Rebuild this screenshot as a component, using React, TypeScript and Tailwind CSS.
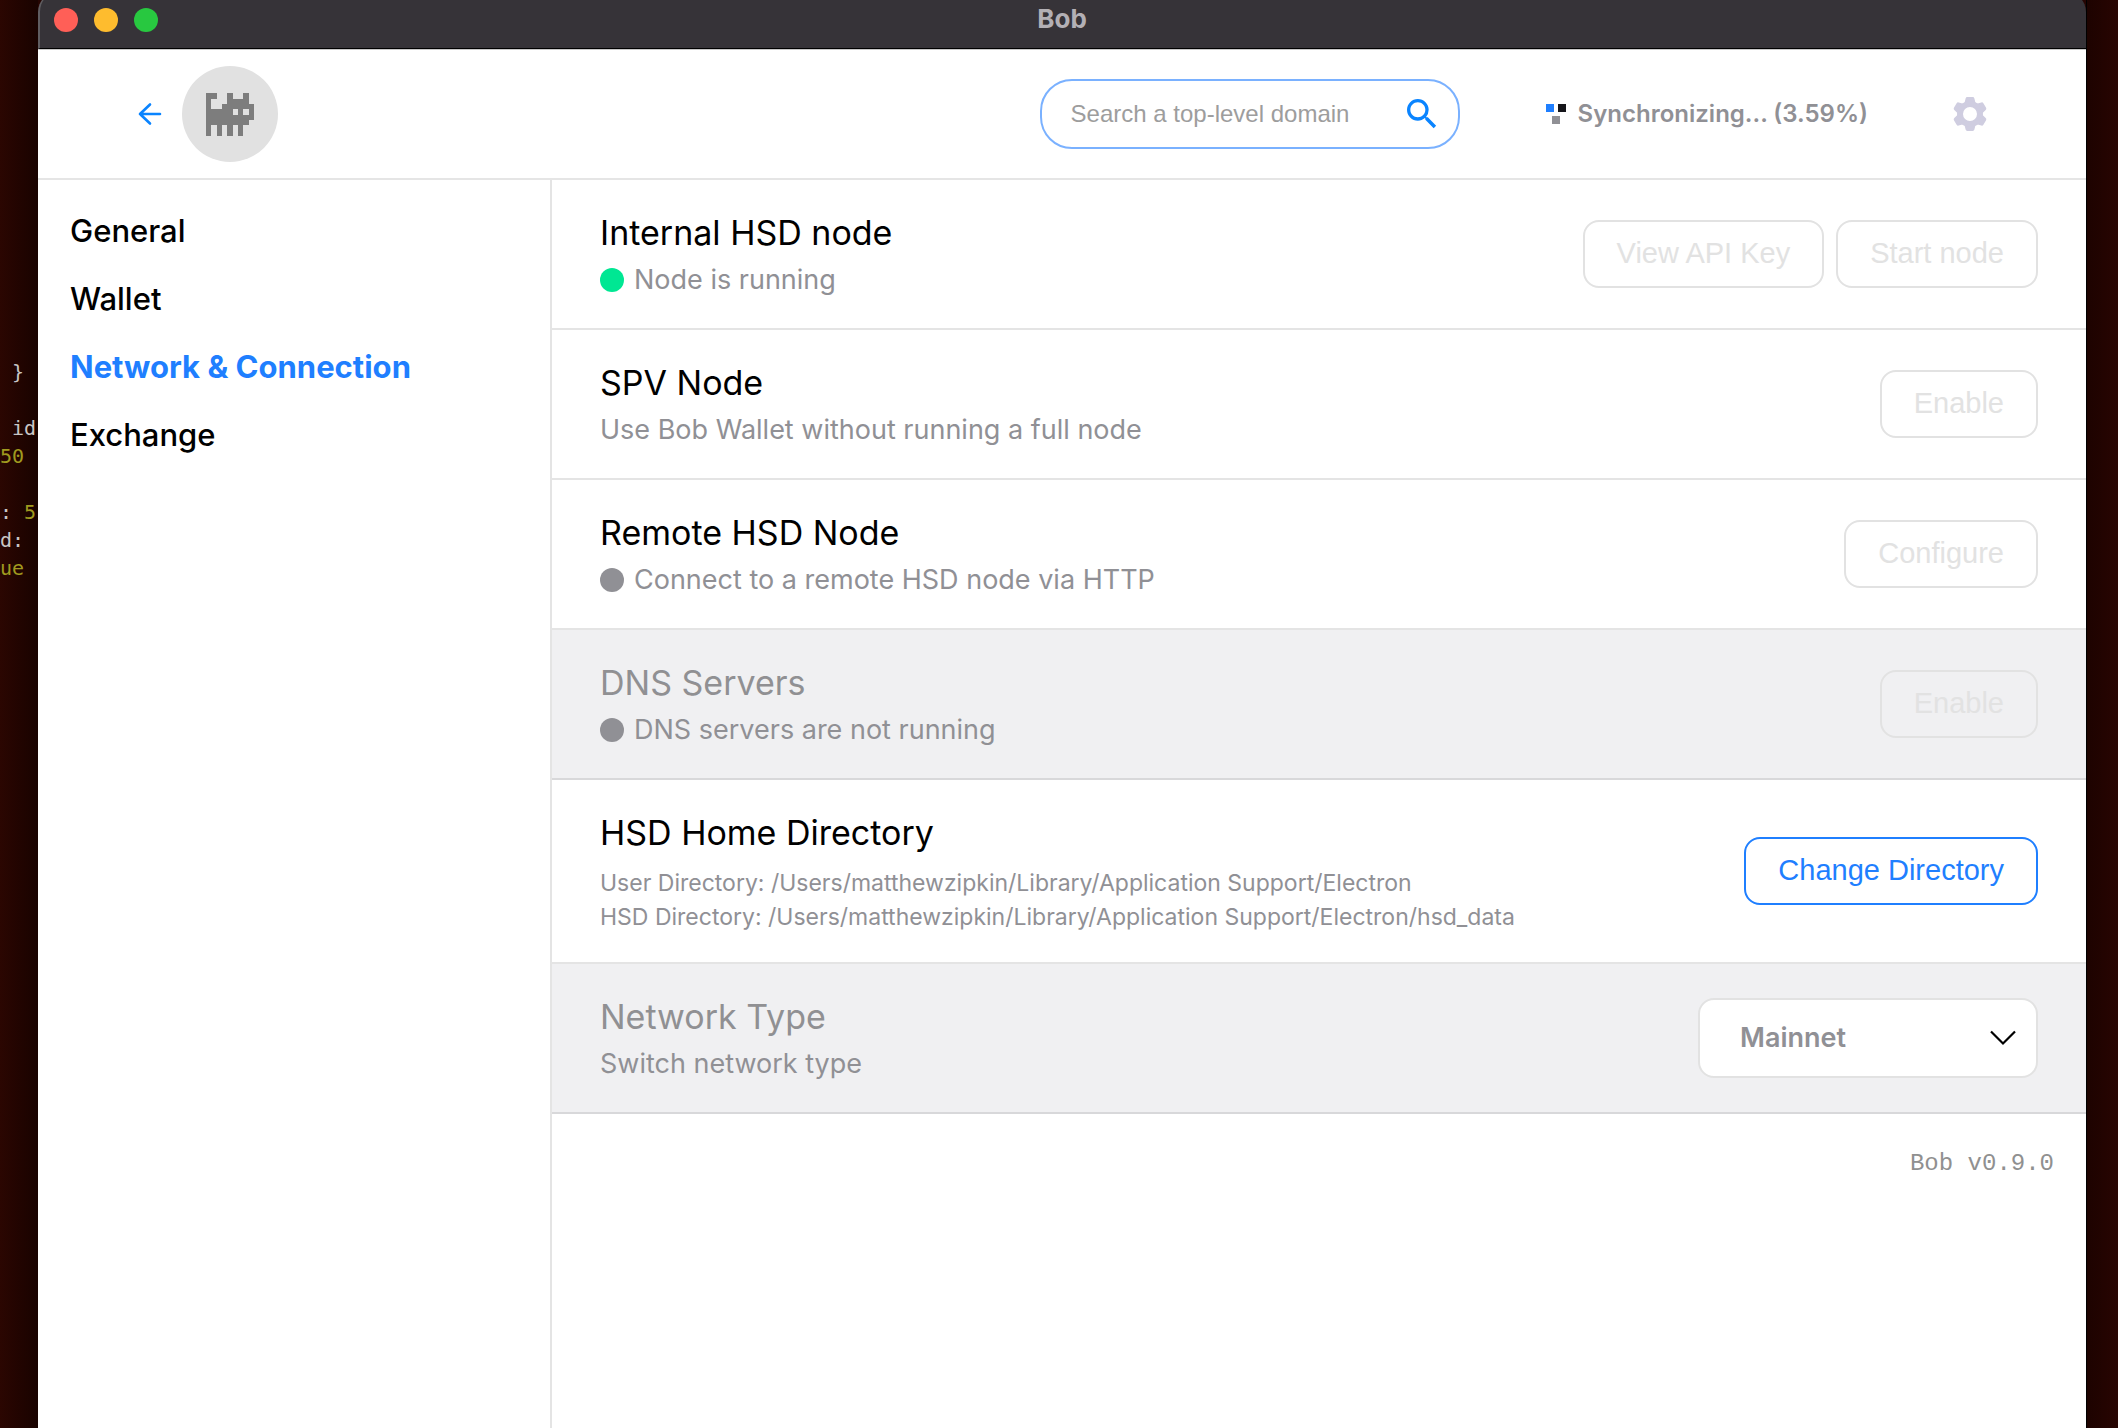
import { useState } from "react";
import { MdSearch } from "react-icons/md";

// what is still visible of the terminal behind the window
const terminalLines = [
  { text: " }", value: "" },
  { text: "", value: "" },
  { text: " id", value: "" },
  { text: "", value: "50" },
  { text: "", value: "" },
  { text: ": ", value: "5" },
  { text: "d:", value: "" },
  { text: "", value: "ue" },
];

const navItems = ["General", "Wallet", "Network & Connection", "Exchange"];

// one string per pixel row of the avatar
const catRows = [
  "##..#..#.",
  "#...####.",
  "#..######",
  "#####.#.#",
  "#########",
  "########.",
  "#.#.#.#..",
  "#.#.#.#..",
];

function Avatar() {
  return (
    <div className="flex size-24 items-center justify-center rounded-full bg-[#e1e1e1]">
      <svg
        viewBox="0 0 9 8"
        className="h-[43px] w-12"
        fill="#7d7d7d"
        shapeRendering="crispEdges"
        aria-hidden="true"
      >
        {catRows.map((row, y) =>
          row
            .split("")
            .map((cell, x) =>
              cell === "#" ? (
                <rect key={`${x}-${y}`} x={x} y={y} width="1" height="1" />
              ) : null
            )
        )}
      </svg>
    </div>
  );
}

function GearIcon() {
  return (
    <svg viewBox="0 0 34 34" className="size-[34px]" aria-hidden="true">
      {[0, 60, 120, 180, 240, 300].map((angle) => (
        <path
          key={angle}
          d="M12.6 1.4Q12.9 0 14.3 0H19.7Q21.1 0 21.4 1.4L23 8H11Z"
          fill="#cfcde0"
          transform={`rotate(${angle} 17 17)`}
        />
      ))}
      <circle
        cx="17"
        cy="17"
        r="10"
        fill="none"
        stroke="#cfcde0"
        strokeWidth="6"
      />
    </svg>
  );
}

function TitleBar() {
  return (
    <div className="flex h-[57px] items-center rounded-t-[20px] border-b border-l-2 border-b-black border-l-[#5f5d61] bg-[#363338] pt-2 pr-4 pl-3.5">
      <div className="flex flex-1 gap-4 pb-2">
        <span className="size-6 rounded-full bg-[#ff5f57]" />
        <span className="size-6 rounded-full bg-[#febc2e]" />
        <span className="size-6 rounded-full bg-[#28c840]" />
      </div>
      <div className="pb-2.5 text-[26px] leading-8 font-bold text-[#b3b0b5]">
        Bob
      </div>
      <div className="flex-1" />
    </div>
  );
}

function Header() {
  return (
    <header className="flex h-[131px] items-center border-t border-b-2 border-t-[#c8c8c8] border-b-[#e5e5e5] pr-[99px] pl-[98px]">
      <button type="button" aria-label="Back" className="mr-[18px] p-0.5">
        <svg
          viewBox="0 0 24 24"
          className="size-6"
          fill="none"
          stroke="#0a84ff"
          strokeWidth="2.6"
          strokeLinecap="round"
          strokeLinejoin="round"
        >
          <path d="M22 12H2M12 2.5L2 12l10 9.5" />
        </svg>
      </button>
      <Avatar />
      <form className="ml-auto flex h-[70px] w-[420px] items-center rounded-[32px] border-2 border-[#7ab1ff] pr-4 pl-[29px]">
        <input
          type="text"
          aria-label="Search a top-level domain"
          placeholder="Search a top-level domain"
          className="min-w-0 flex-1 text-2xl outline-none placeholder:text-[#9d9d9d] font-['Liberation_Sans',sans-serif]"
        />
        <button type="button" aria-label="Search">
          <MdSearch className="size-10 text-[#0a84ff]" />
        </button>
      </form>
      <div className="ml-[86px] flex items-center gap-3 text-2xl font-semibold text-[#909095]">
        <svg viewBox="0 0 20 20" className="size-5" aria-hidden="true">
          <rect width="8" height="8" fill="#1f7fff" />
          <rect x="12" width="8" height="8" fill="#15151a" />
          <rect x="6" y="12" width="8" height="8" fill="#909095" />
        </svg>
        Synchronizing... (3.59%)
      </div>
      <button type="button" aria-label="Settings" className="ml-[85px]">
        <GearIcon />
      </button>
    </header>
  );
}

function StatusDot({ on }: { on: boolean }) {
  return (
    <span
      className={`size-6 rounded-full ${on ? "bg-[#00e793]" : "bg-[#909095]"}`}
    />
  );
}

function ActionButton({
  children,
  disabled = true,
}: {
  children: string;
  disabled?: boolean;
}) {
  return (
    <button
      type="button"
      disabled={disabled}
      className={`h-[68px] rounded-2xl border-2 px-8 text-[29px] font-['Liberation_Sans',sans-serif] ${
        disabled
          ? "border-[#e2e2e2] text-[#e2e2e2]"
          : "border-[#1f7fff] text-[#1f7fff]"
      }`}
    >
      {children}
    </button>
  );
}

function Row({
  title,
  status,
  description,
  muted = false,
  children,
}: {
  title: string;
  status?: "on" | "off";
  description: React.ReactNode;
  muted?: boolean;
  children: React.ReactNode;
}) {
  return (
    <section
      className={`flex items-center justify-between border-b-2 px-12 py-7 ${
        muted
          ? "border-[#d8d8da] bg-[#f0f0f2] text-[#909093]"
          : "border-[#e4e4e4] text-black"
      }`}
    >
      <div>
        <h2 className="mb-0.5 text-[34px] leading-[50px]">{title}</h2>
        <div className="flex items-center gap-2.5 text-[27px] leading-10 text-[#909095]">
          {status && <StatusDot on={status === "on"} />}
          {description}
        </div>
      </div>
      <div className="flex gap-3">{children}</div>
    </section>
  );
}

export default function App() {
  const [active, setActive] = useState("Network & Connection");

  return (
    <div className="flex h-screen overflow-hidden bg-[#260502] font-[Inter,sans-serif]">
      <aside className="w-[38px] shrink-0 overflow-hidden bg-linear-to-r from-[#2b0601] to-[#190300] pt-[358px] font-['DejaVu_Sans_Mono',monospace] text-xl leading-7 whitespace-pre text-[#c9c6c5]">
        {terminalLines.map((line, i) => (
          <div key={i} className="h-7">
            {line.text}
            <span className="text-[#a09a1f]">{line.value}</span>
          </div>
        ))}
      </aside>
      <div className="-mt-2 flex min-w-0 flex-1 flex-col">
        <TitleBar />
        <div className="flex flex-1 flex-col bg-white">
          <Header />
          <div className="flex flex-1">
            <nav className="w-[calc(25%+2px)] shrink-0 border-r-2 border-[#e4e4e4] px-8 pt-[17px]">
              {navItems.map((item) => (
                <a
                  key={item}
                  href="#"
                  onClick={() => setActive(item)}
                  className={`block text-[31px] leading-[68px] whitespace-nowrap ${
                    item === active
                      ? "font-bold text-[#1f7fff]"
                      : "font-medium text-black"
                  }`}
                >
                  {item}
                </a>
              ))}
            </nav>
            <main className="flex-1">
              <Row
                title="Internal HSD node"
                status="on"
                description="Node is running"
              >
                <ActionButton>View API Key</ActionButton>
                <ActionButton>Start node</ActionButton>
              </Row>
              <Row
                title="SPV Node"
                description="Use Bob Wallet without running a full node"
              >
                <ActionButton>Enable</ActionButton>
              </Row>
              <Row
                title="Remote HSD Node"
                status="off"
                description="Connect to a remote HSD node via HTTP"
              >
                <ActionButton>Configure</ActionButton>
              </Row>
              <Row
                title="DNS Servers"
                status="off"
                description="DNS servers are not running"
                muted
              >
                <ActionButton>Enable</ActionButton>
              </Row>
              <Row
                title="HSD Home Directory"
                description={
                  <div className="pt-1.5 text-[23px] leading-[34px]">
                    <p>
                      User Directory: /Users/matthewzipkin/Library/Application
                      Support/Electron
                    </p>
                    <p>
                      HSD Directory: /Users/matthewzipkin/Library/Application
                      Support/Electron/hsd_data
                    </p>
                  </div>
                }
              >
                <ActionButton disabled={false}>Change Directory</ActionButton>
              </Row>
              <Row
                title="Network Type"
                description="Switch network type"
                muted
              >
                <div className="relative">
                  <select
                    aria-label="Network type"
                    className="h-20 w-[340px] appearance-none rounded-2xl border-2 border-[#e2e2e2] bg-white px-10 text-[27px] font-semibold text-[#909095]"
                  >
                    <option>Mainnet</option>
                  </select>
                  <svg
                    viewBox="0 0 26 16"
                    className="pointer-events-none absolute top-8 right-[22px] h-4 w-[26px]"
                    fill="none"
                    stroke="black"
                    strokeWidth="2.2"
                  >
                    <path d="M1 1.5L13 13.5L25 1.5" />
                  </svg>
                </div>
              </Row>
              <footer className="px-8 pt-[34px] text-right text-2xl text-[#909090] font-['Liberation_Mono',monospace]">
                Bob v0.9.0
              </footer>
            </main>
          </div>
        </div>
      </div>
      <div className="w-8 shrink-0 border-l border-black bg-linear-to-r from-[#1d0300] to-[#280502]" />
    </div>
  );
}
